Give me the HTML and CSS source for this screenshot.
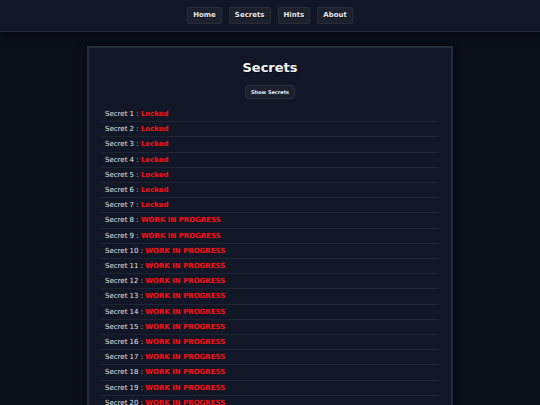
FILE: index.html
```html
<!DOCTYPE html>
<html>
<head>
	<title>Secrets</title>
	<meta charset="utf-8">
	<meta name="viewport" content="width=device-width, initial-scale=1">
	<link rel="stylesheet" href="styles.css">
</head>
<body>
	<header class="topBar">
		<nav class="navButtons">
			<a class="navButton" href="#">Home</a>
			<a class="navButton" href="#">Secrets</a>
			<a class="navButton" href="#">Hints</a>
			<a class="navButton" href="#">About</a>
		</nav>
	</header>
	<main class="card">
		<h1 class="cardTitle">Secrets</h1>
		<div class="buttonRow">
			<button class="showButton">Show Secrets</button>
		</div>
		<ul class="secretList">
			<li>Secret 1 : <span class="status">Locked</span></li>
			<li>Secret 2 : <span class="status">Locked</span></li>
			<li>Secret 3 : <span class="status">Locked</span></li>
			<li>Secret 4 : <span class="status">Locked</span></li>
			<li>Secret 5 : <span class="status">Locked</span></li>
			<li>Secret 6 : <span class="status">Locked</span></li>
			<li>Secret 7 : <span class="status">Locked</span></li>
			<li>Secret 8 : <span class="status">WORK IN PROGRESS</span></li>
			<li>Secret 9 : <span class="status">WORK IN PROGRESS</span></li>
			<li>Secret 10 : <span class="status">WORK IN PROGRESS</span></li>
			<li>Secret 11 : <span class="status">WORK IN PROGRESS</span></li>
			<li>Secret 12 : <span class="status">WORK IN PROGRESS</span></li>
			<li>Secret 13 : <span class="status">WORK IN PROGRESS</span></li>
			<li>Secret 14 : <span class="status">WORK IN PROGRESS</span></li>
			<li>Secret 15 : <span class="status">WORK IN PROGRESS</span></li>
			<li>Secret 16 : <span class="status">WORK IN PROGRESS</span></li>
			<li>Secret 17 : <span class="status">WORK IN PROGRESS</span></li>
			<li>Secret 18 : <span class="status">WORK IN PROGRESS</span></li>
			<li>Secret 19 : <span class="status">WORK IN PROGRESS</span></li>
			<li>Secret 20 : <span class="status">WORK IN PROGRESS</span></li>
		</ul>
	</main>
</body>
</html>
```

FILE: styles.css
```css
body {
	margin: 0;
	padding: 0;
	background: #0a0f19;
	font-family: "DejaVu Sans", Verdana, sans-serif;
	color: #e2e4ea;
	overflow: hidden;
}

.topBar {
	background: #111726;
	border-bottom: 1px solid #1f2738;
	padding: 7px 0;
	box-shadow: 0 2px 8px rgba(0, 0, 0, 0.5);
}

.navButtons {
	display: flex;
	justify-content: center;
	gap: 7px;
}

.navButton {
	display: block;
	padding: 3px 5px;
	font-size: 7px;
	line-height: 9px;
	font-weight: bold;
	color: #e8eaf0;
	text-decoration: none;
	text-shadow: 1px 1px 0 rgba(0, 0, 0, 0.6);
	background: #1d212d;
	border: 1px solid #282d39;
	border-radius: 2px;
}

.card {
	width: 338px;
	margin: 14px auto 0;
	padding: 12px 12px;
	background: #111726;
	border: 2px solid #262b3a;
	box-shadow: 0 0 8px rgba(8, 4, 14, 0.8);
}

.cardTitle {
	margin: 0;
	text-align: center;
	font-size: 13px;
	line-height: 15px;
	font-weight: bold;
	color: #f4f5f8;
	text-shadow: 1px 1px 0 rgba(0, 0, 0, 0.5);
}

.buttonRow {
	display: flex;
	justify-content: center;
	margin-top: 10px;
}

.showButton {
	padding: 3px 5px;
	font-family: "DejaVu Sans", Verdana, sans-serif;
	font-size: 5px;
	line-height: 6px;
	font-weight: bold;
	color: #e8eaf0;
	background: #1d212d;
	border: 1px solid #2b303c;
	border-radius: 2px;
}

.secretList {
	list-style: none;
	margin: 8px 0 0;
	padding: 0;
}

.secretList li {
	padding-left: 4px;
	font-size: 7px;
	line-height: 14.2px;
	border-bottom: 1px solid #1f2433;
}

.status {
	font-weight: bold;
	color: #e5141b;
	text-shadow: 0 0 1px rgba(255, 0, 0, 0.4);
}
```
